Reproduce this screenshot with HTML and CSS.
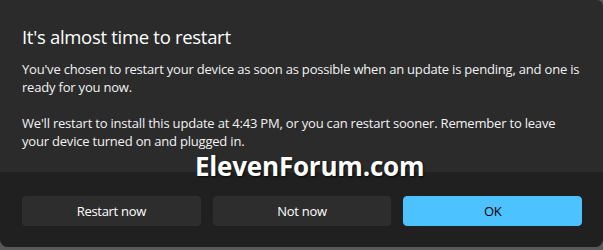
FILE: index.html
```html
<!DOCTYPE html>
<html>
<head>
<meta charset="utf-8">
<link rel="stylesheet" href="styles.css">
</head>
<body>
<div class="dialog">
  <div class="content">
    <h1 class="title">It's almost time to restart</h1>
    <p class="text">You've chosen to restart your device as soon as possible when an update is pending, and one is ready for you now.</p>
    <p class="text">We'll restart to install this update at 4:43 PM, or you can restart sooner. Remember to leave your device turned on and plugged in.</p>
  </div>
  <div class="footer">
    <button class="btn">Restart now</button>
    <button class="btn">Not now</button>
    <button class="btn primary">OK</button>
  </div>
  <div class="watermark">ElevenForum.com</div>
</div>
</body>
</html>
```

FILE: styles.css
```css
html, body {
  margin: 0;
  padding: 0;
}
body {
  width: 603px;
  height: 250px;
  background: #585858;
  overflow: hidden;
  font-family: "Open Sans", "Noto Sans", sans-serif;
}
.dialog {
  position: relative;
  width: 603px;
  height: 247px;
  background: #2b2b2b;
  border-radius: 0 6px 8px 8px;
  overflow: hidden;
  display: flex;
  flex-direction: column;
}
.content {
  padding: 23px 18px 0 22px;
  height: 172px;
  box-sizing: border-box;
  flex: none;
}
.title {
  margin: 0;
  font-size: 18.5px;
  font-weight: 400;
  color: #ffffff;
  line-height: 28px;
  letter-spacing: -0.3px;
}
.text {
  margin: 9px 0 0 0;
  font-size: 13px;
  line-height: 18px;
  color: #f2f2f2;
  letter-spacing: -0.2px;
}
.text + .text {
  margin-top: 18px;
}
.footer {
  flex: 1;
  background: #202020;
  display: flex;
  gap: 12px;
  padding: 24px 21px 0 22px;
  align-items: flex-start;
}
.btn {
  width: 179px;
  height: 30px;
  border-radius: 4px;
  border: 1px solid #303030;
  background: #2d2d2d;
  color: #ffffff;
  font-family: "Open Sans", "Noto Sans", sans-serif;
  font-size: 13px;
  letter-spacing: -0.3px;
  padding: 0;
}
.primary {
  background: #4cc2ff;
  border-color: #4cc2ff;
  color: #000000;
}
.watermark {
  position: absolute;
  left: 195px;
  top: 149px;
  font-family: "Open Sans", sans-serif;
  font-weight: 700;
  font-size: 26px;
  line-height: 34px;
  letter-spacing: -0.2px;
  color: #ffffff;
  text-shadow: 1px 1px 2px rgba(0,0,0,0.8);
}
```
